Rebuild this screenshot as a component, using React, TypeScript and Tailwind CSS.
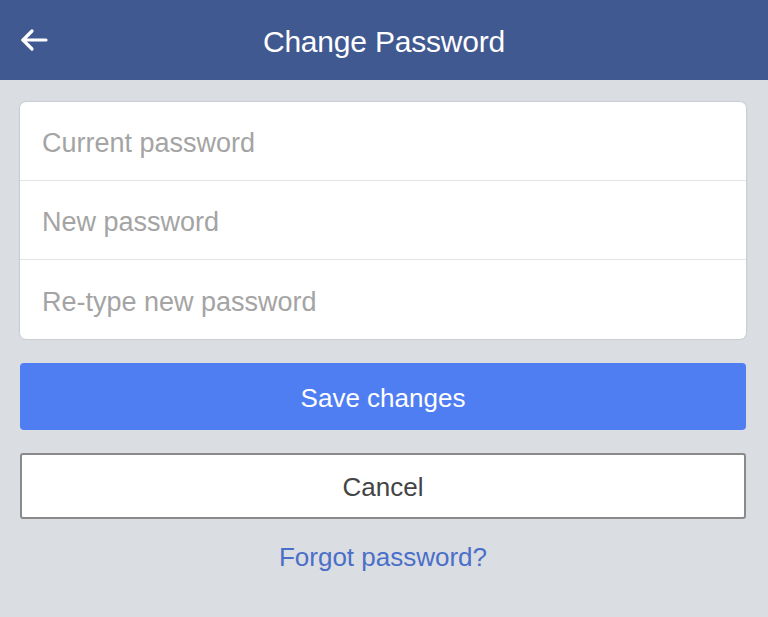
import React from 'react';

const fields = ['Current password', 'New password', 'Re-type new password'];

const App: React.FC = () => {
  return (
    <div className="min-h-[617px] w-full bg-[#dadde2]" style={{ fontFamily: '"Liberation Sans", Arial, sans-serif' }}>
      {/* header */}
      <div className="relative flex h-[80px] items-center justify-center bg-[#415991]">
        <button className="absolute left-[18px] top-[26px] text-white">
          <svg width="32" height="28" viewBox="0 0 32 28" fill="none" stroke="white" strokeWidth="3.2" strokeLinecap="round" strokeLinejoin="round">
            <path d="M28 14H5" />
            <path d="M14 5L5 14l9 9" />
          </svg>
        </button>
        <h1 className="pt-[2px] text-[30px] tracking-[-0.2px] text-white">Change Password</h1>
      </div>

      <div className="pl-[20px] pr-[22px] pt-[22px]">
        <div className="overflow-hidden rounded-[6px] bg-white shadow-[0_0_1px_1px_rgba(0,0,0,0.08)]">
          {fields.map((f, i) => (
            <div
              key={f}
              className={`flex h-[79px] items-center px-[22px] pt-[5px] ${i < fields.length - 1 ? 'border-b border-[#e3e4e7]' : ''}`}
            >
              <input
                type="password"
                placeholder={f}
                className="w-full bg-transparent text-[27px] text-[#333] outline-none placeholder:text-[#a4a4a4]"
              />
            </div>
          ))}
        </div>

        <button className="mt-[24px] flex h-[67px] w-full items-center justify-center rounded-[4px] bg-[#4f7ef3] pt-[4px] text-[26px] text-white">
          Save changes
        </button>

        <button className="mt-[23px] flex h-[66px] w-full items-center justify-center rounded-[3px] border-2 border-[#8a8a8a] bg-white pt-[3px] text-[26px] text-[#444]">
          Cancel
        </button>

        <div className="mt-[19px] text-center">
          <a className="text-[26px] text-[#4a6fc8]">Forgot password?</a>
        </div>
      </div>
    </div>
  );
};

export default App;
